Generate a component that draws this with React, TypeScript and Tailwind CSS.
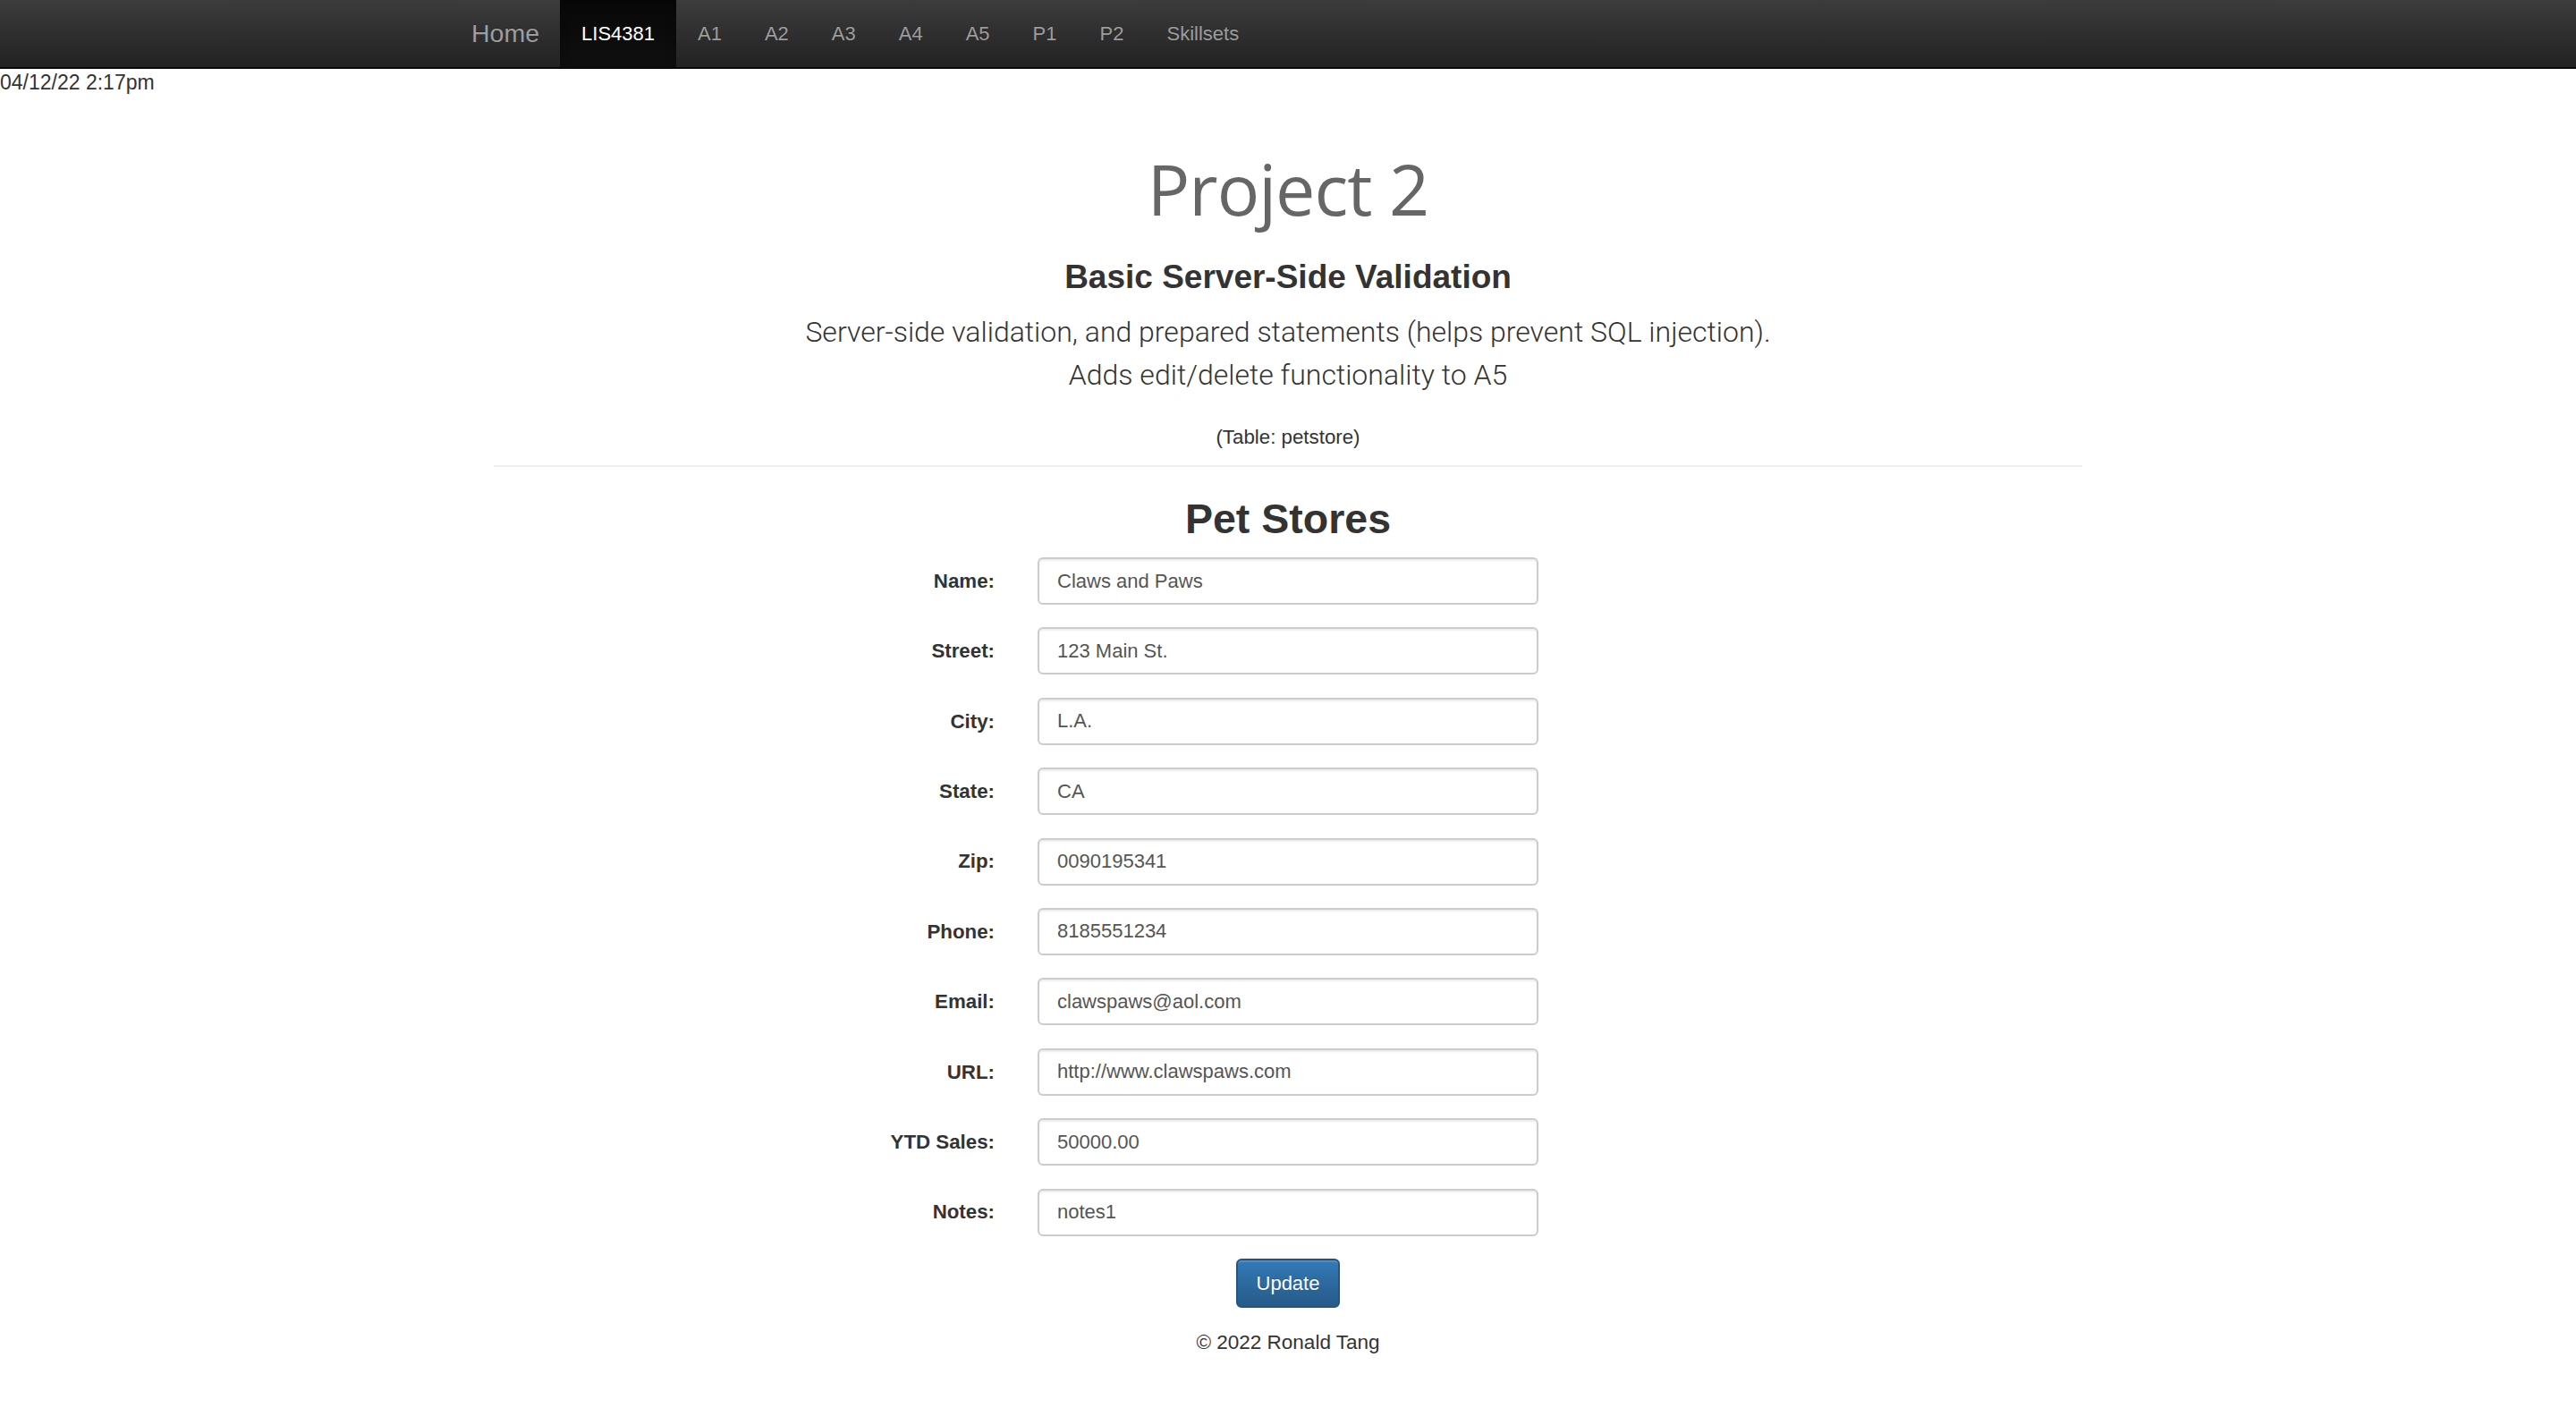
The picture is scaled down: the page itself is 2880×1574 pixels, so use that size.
import React from "react";

const navItems = ["LIS4381", "A1", "A2", "A3", "A4", "A5", "P1", "P2", "Skillsets"];

const fields: { label: string; value: string }[] = [
  { label: "Name:", value: "Claws and Paws" },
  { label: "Street:", value: "123 Main St." },
  { label: "City:", value: "L.A." },
  { label: "State:", value: "CA" },
  { label: "Zip:", value: "0090195341" },
  { label: "Phone:", value: "8185551234" },
  { label: "Email:", value: "clawspaws@aol.com" },
  { label: "URL:", value: "http://www.clawspaws.com" },
  { label: "YTD Sales:", value: "50000.00" },
  { label: "Notes:", value: "notes1" },
];

function NavBar() {
  return (
    <nav className="h-[77px] border-b-2 border-[#080808] bg-gradient-to-b from-[#3c3c3c] to-[#222]">
      <div className="mx-auto flex h-full w-[1872px] items-stretch">
        <a className="flex items-center px-[23px] text-[28.5px] text-[#9d9d9d] [text-shadow:0_-1px_0_rgba(0,0,0,0.25)]">
          Home
        </a>
        <ul className="flex items-stretch">
          {navItems.map((item, i) => (
            <li key={item} className="flex">
              <a
                className={
                  i === 0
                    ? "flex items-center bg-gradient-to-b from-[#080808] to-[#0f0f0f] px-[24px] text-[22px] text-white shadow-[inset_0_4px_12px_rgba(0,0,0,0.25)]"
                    : "flex items-center px-[24px] text-[22px] text-[#9d9d9d] [text-shadow:0_-1px_0_rgba(0,0,0,0.25)]"
                }
              >
                {item}
              </a>
            </li>
          ))}
        </ul>
      </div>
    </nav>
  );
}

export default function App() {
  return (
    <div className="min-h-screen bg-white font-['Liberation_Sans',Arial,sans-serif] text-[#333]">
      <NavBar />
      <div className="text-[23px] leading-[30px]">04/12/22 2:17pm</div>

      <div className="mx-auto w-[1776px] text-center">
        <h1 className="mt-[61px] font-['Open_Sans',sans-serif] text-[79px] leading-[86px] tracking-[-1px] text-[#666]">
          Project 2
        </h1>
        <h3 className="mt-[35px] text-[37px] font-bold leading-[41px]">
          Basic Server-Side Validation
        </h3>
        <p className="mt-[17px] font-['Roboto',sans-serif] text-[32px] font-light leading-[48px]">
          Server-side validation, and prepared statements (helps prevent SQL injection).
          <br />
          Adds edit/delete functionality to A5
        </p>
        <p className="mt-[31px] text-[22.3px] leading-[30px]">(Table: petstore)</p>
        <hr className="mt-[16px] border-t-2 border-[#eee]" />

        <h2 className="mt-[33px] text-[46.5px] font-bold leading-[51px]">Pet Stores</h2>

        <form className="mt-[17px] flex flex-col gap-[25.4px]">
          {fields.map((f) => (
            <div key={f.label} className="grid grid-cols-[1fr_560px_1fr] items-center gap-x-[48px]">
              <label className="text-right text-[22.3px] font-bold">{f.label}</label>
              <input
                readOnly
                value={f.value}
                className="h-[53px] w-full rounded-[6px] border-2 border-[#ccc] px-[20px] text-[22px] text-[#555] shadow-[inset_0_2px_2px_rgba(0,0,0,0.075)] outline-none"
              />
              <div />
            </div>
          ))}
        </form>

        <div className="mt-[25px] flex justify-center">
          <button
            type="button"
            className="h-[55px] w-[116px] rounded-[6px] border-2 border-[#245580] bg-gradient-to-b from-[#337ab7] to-[#265a88] text-[22px] text-white shadow-[inset_0_2px_0_rgba(255,255,255,0.15)] [text-shadow:0_-1px_0_rgba(0,0,0,0.2)]"
          >
            Update
          </button>
        </div>

        <footer className="mt-[24px] text-[22.5px] leading-[30px]">© 2022 Ronald Tang</footer>
      </div>
    </div>
  );
}
